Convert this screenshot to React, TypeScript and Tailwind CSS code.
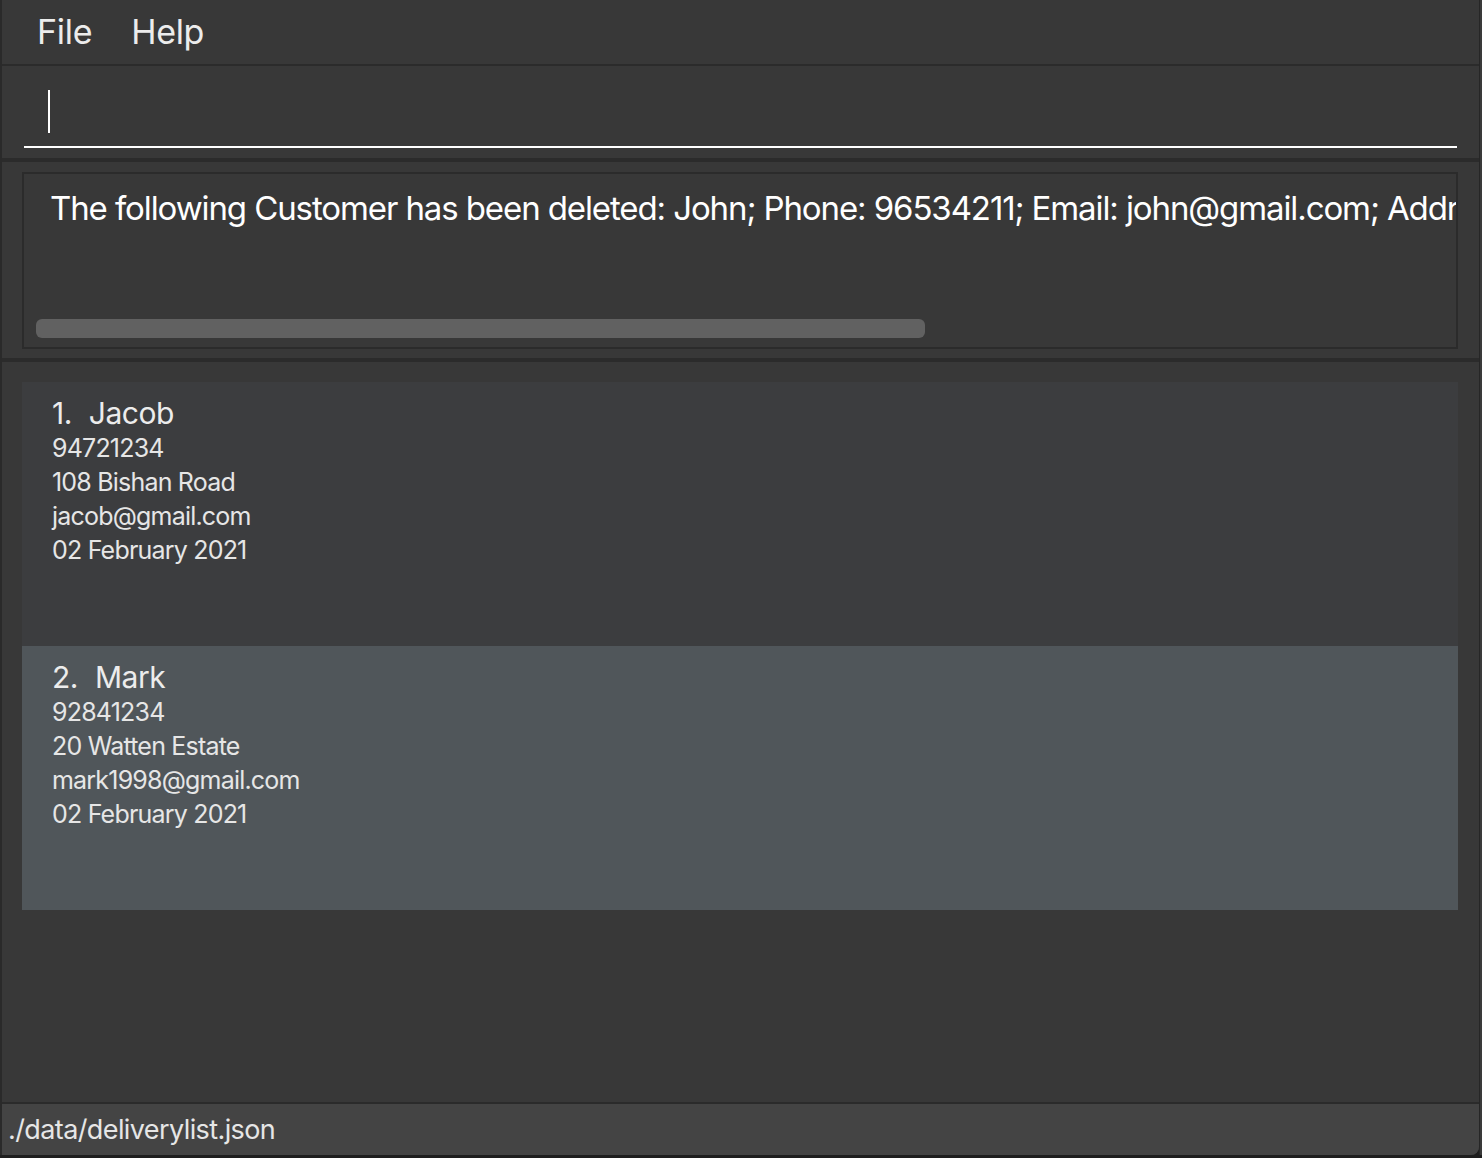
import React from 'react'

const customers = [
  {
    name: 'Jacob',
    phone: '94721234',
    address: '108 Bishan Road',
    email: 'jacob@gmail.com',
    date: '02 February 2021',
    bg: 'bg-[#3c3d3f]',
  },
  {
    name: 'Mark',
    phone: '92841234',
    address: '20 Watten Estate',
    email: 'mark1998@gmail.com',
    date: '02 February 2021',
    bg: 'bg-[#50565a]',
  },
]

function CustomerCard({ index, c }: { index: number; c: (typeof customers)[number] }) {
  return (
    <div className={`h-[264px] pl-[30px] pt-[13px] ${c.bg}`}>
      <div className="flex text-[30px] leading-[36px] tracking-[-0.5px] text-[#ececec]">
        <span className="mr-[17px]">{index}.</span>
        <span>{c.name}</span>
      </div>
      <div className="text-[25px] leading-[34px] tracking-[-0.8px] text-[#e6e6e6]">
        <div>{c.phone}</div>
        <div>{c.address}</div>
        <div>{c.email}</div>
        <div>{c.date}</div>
      </div>
    </div>
  )
}

export default function App() {
  return (
    <div
      className="flex h-[1158px] w-[1482px] bg-[#1e1e1e]"
      style={{ fontFamily: 'Inter, "Noto Sans", sans-serif' }}
    >
      <div className="flex h-[1155px] w-[1479px] flex-col overflow-hidden rounded-br-[8px] border-l-2 border-[#2a2a2a] bg-[#383838]">
        {/* menu bar */}
        <div className="flex h-[64px] items-center gap-[39px] pb-[2px] pl-[35px] text-[34px] tracking-[-0.3px] text-[#ececec]">
          <span>File</span>
          <span>Help</span>
        </div>
        <div className="h-[2px] bg-[#2b2b2b]" />

        {/* command box */}
        <div className="h-[92px] px-[22px] pt-[24px]">
          <div className="h-[58px] border-b-2 border-white pl-[24px]">
            <div className="h-[43px] w-[2px] bg-white" />
          </div>
        </div>
        <div className="h-[4px] bg-[#2b2b2b]" />

        {/* result display */}
        <div className="h-[196px] px-[20px] pt-[10px]">
          <div className="flex h-[177px] w-[1436px] flex-col justify-between overflow-hidden border-2 border-[#2b2b2b] pb-[9px] pl-[12px]">
            <div className="overflow-hidden whitespace-nowrap pl-[14px] pt-[12px] text-[33px] leading-[44px] tracking-[-1.1px] text-white">
              The following Customer has been deleted: John; Phone: 96534211; Email: john@gmail.com; Address: 311, Clementi Ave 2, #02-25
            </div>
            <div className="h-[19px] w-[889px] rounded-[6px] bg-[#616161]" />
          </div>
        </div>
        <div className="h-[4px] bg-[#2b2b2b]" />

        {/* list */}
        <div className="flex-1 px-[20px] pt-[20px]">
          <div className="w-[1436px]">
            {customers.map((c, i) => (
              <CustomerCard c={c} index={i + 1} key={c.name} />
            ))}
          </div>
        </div>

        {/* status bar */}
        <div className="h-[2px] bg-[#2b2b2b]" />
        <div className="flex h-[51px] items-center bg-[#444444] pl-[6px] pt-[2px] text-[27px] tracking-[-0.6px] text-[#e6e6e6]">
          ./data/deliverylist.json
        </div>
      </div>
      <div className="flex h-[1155px] w-[3px] bg-[#3a3a3a]">
        <div className="w-[1px] bg-[#262626]" />
      </div>
    </div>
  )
}
